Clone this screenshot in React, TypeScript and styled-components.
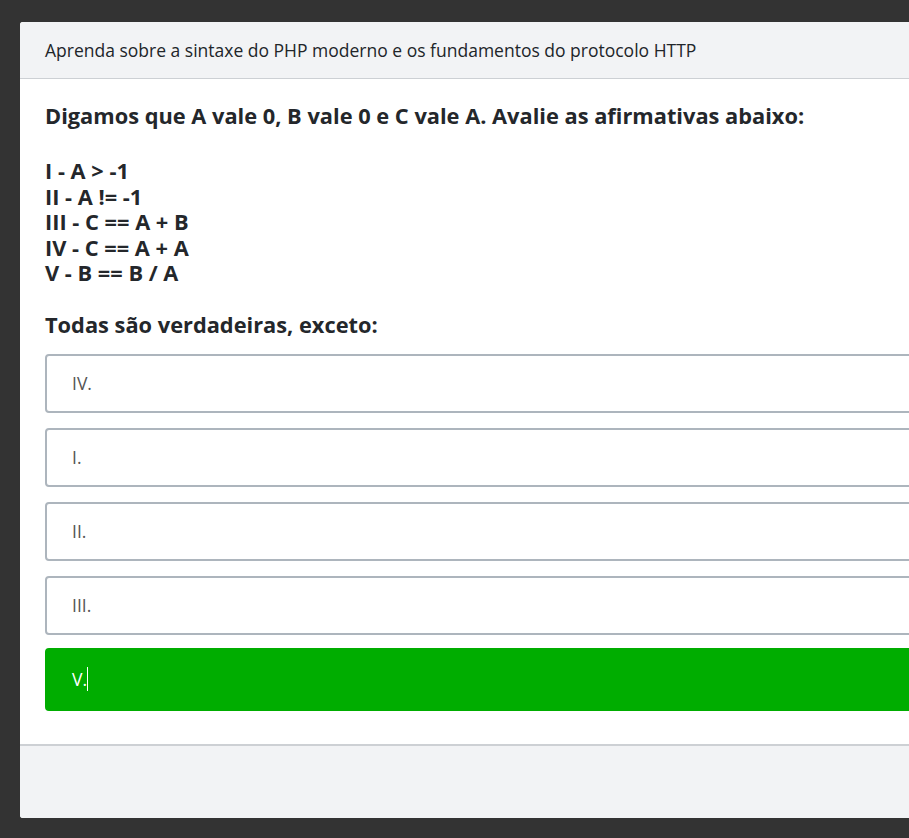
import React from "react";
import styled, { createGlobalStyle } from "styled-components";

const GlobalStyle = createGlobalStyle`
  html, body {
    margin: 0;
    padding: 0;
    background: #333333;
    overflow: hidden;
  }
  body {
    font-family: "Open Sans", "Noto Sans", sans-serif;
  }
`;

const Page = styled.div`
  min-height: 838px;
  padding: 22px 0 0 20px;
  box-sizing: border-box;
`;

const Card = styled.div`
  width: 1000px;
  background: #fff;
  border-radius: 3px;
  overflow: hidden;
`;

const Header = styled.div`
  background: #f2f3f5;
  border-bottom: 1px solid #cdd0d4;
  padding: 16px 25px 16px;
  font-size: 17.5px;
  line-height: 24px;
  color: #212529;
`;

const Body = styled.div`
  padding: 19px 0 33px 25px;
  width: 884px;
  color: #24272b;
`;

const Question = styled.h2`
  margin: 0;
  font-size: 21.8px;
  font-weight: 700;
  line-height: 36px;
`;

const Statements = styled.div`
  margin-top: 24px;
  font-size: 21.8px;
  font-weight: 700;
  line-height: 25.5px;
`;

const Prompt = styled.h3`
  margin: 24px 0 0;
  font-size: 21.8px;
  font-weight: 700;
  line-height: 30px;
`;

const Options = styled.div`
  margin-top: 14px;
  display: flex;
  flex-direction: column;
  gap: 15px;
`;

const Option = styled.div<{ correct?: boolean }>`
  display: flex;
  align-items: center;
  box-sizing: border-box;
  height: ${p => (p.correct ? "63px" : "59px")};
  margin-top: ${p => (p.correct ? "-2px" : "0")};
  padding: 0 25px;
  border: 2px solid ${p => (p.correct ? "#00ad00" : "#adb5bd")};
  border-radius: 4px;
  background: ${p => (p.correct ? "#00ad00" : "#fff")};
  color: ${p => (p.correct ? "#fff" : "#555")};
  font-size: 17.5px;
`;

const Caret = styled.span`
  display: inline-block;
  width: 1px;
  height: 24px;
  background: #fff;
`;

const Footer = styled.div`
  height: 72px;
  background: #f2f3f5;
  border-top: 2px solid #cdd0d4;
`;

const statements = [
  "I - A > -1",
  "II - A != -1",
  "III - C == A + B",
  "IV - C == A + A",
  "V - B == B / A"
];

const options = [
  { label: "IV.", correct: false },
  { label: "I.", correct: false },
  { label: "II.", correct: false },
  { label: "III.", correct: false },
  { label: "V.", correct: true }
];

const App: React.FC = () => (
  <Page>
    <GlobalStyle />
    <Card>
      <Header>
        Aprenda sobre a sintaxe do PHP moderno e os fundamentos do protocolo HTTP
      </Header>
      <Body>
        <Question>
          Digamos que A vale 0, B vale 0 e C vale A. Avalie as afirmativas abaixo:
        </Question>
        <Statements>
          {statements.map(s => (
            <div key={s}>{s}</div>
          ))}
        </Statements>
        <Prompt>Todas são verdadeiras, exceto:</Prompt>
        <Options>
          {options.map(({ label, correct }) => (
            <Option key={label} correct={correct}>
              {label}
              {correct && <Caret />}
            </Option>
          ))}
        </Options>
      </Body>
      <Footer />
    </Card>
  </Page>
);

export default App;
